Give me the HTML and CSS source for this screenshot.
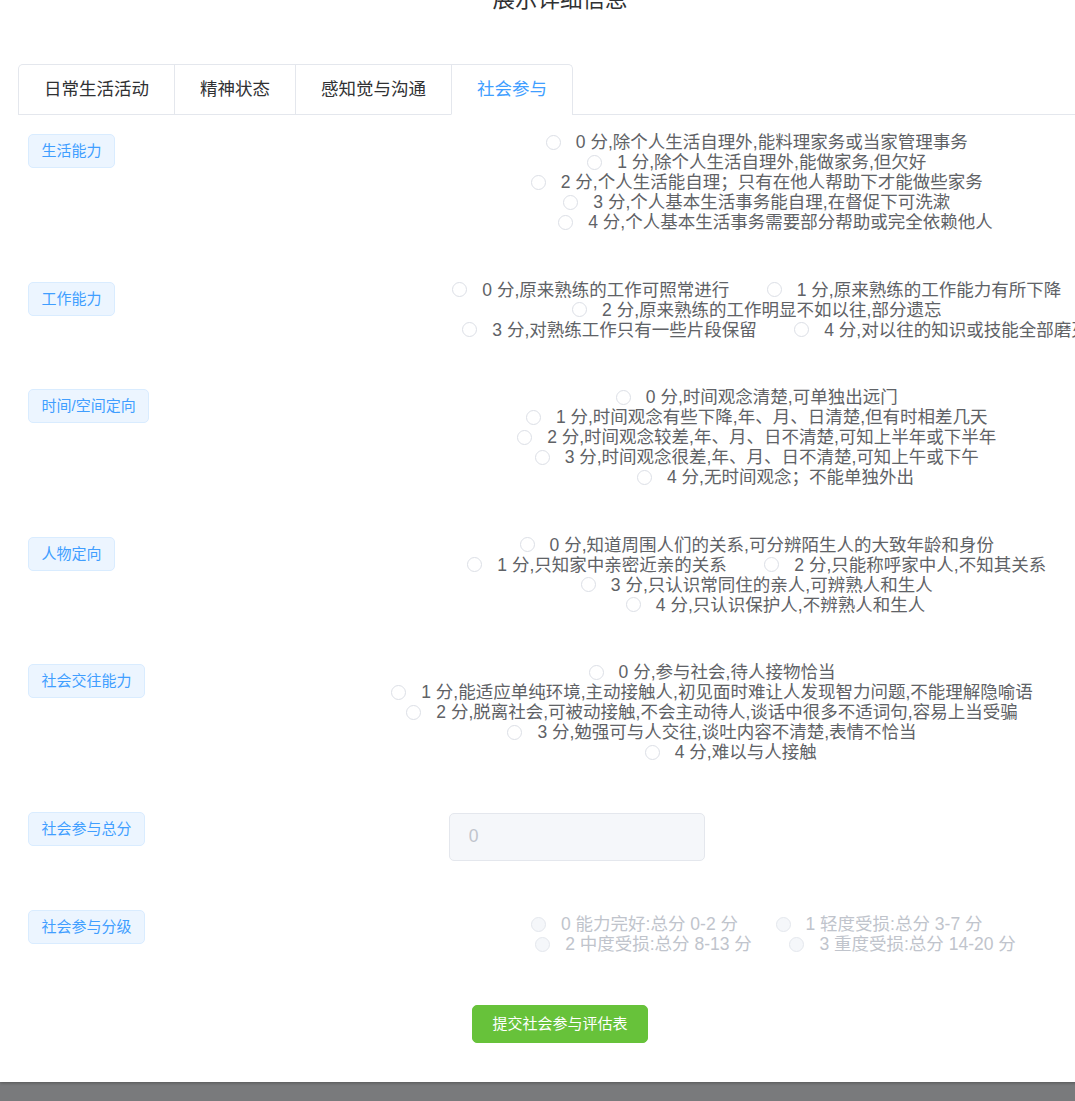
FILE: index.html
```html
<!DOCTYPE html>
<html lang="zh-CN">
<head>
<meta charset="utf-8">
<title>展示详细信息</title>
<link rel="stylesheet" href="styles.css">
</head>
<body>
<div class="dialog">
  <div class="dialog-header"><span class="dialog-title">展示详细信息</span></div>
  <div class="dialog-body">
    <div class="tabs-header">
      <div class="tabs-list">
        <div class="tab">日常生活活动</div>
        <div class="tab">精神状态</div>
        <div class="tab">感知觉与沟通</div>
        <div class="tab is-active">社会参与</div>
      </div>
    </div>
    <div class="tab-content">
      <div class="form">
        <div class="row">
          <div class="row-label"><span class="tag">生活能力</span></div>
          <div class="options">
            <div class="line"><label class="radio"><span class="dot"></span><span class="text">0 分,除个人生活自理外,能料理家务或当家管理事务</span></label></div>
            <div class="line"><label class="radio"><span class="dot"></span><span class="text">1 分,除个人生活自理外,能做家务,但欠好</span></label></div>
            <div class="line"><label class="radio"><span class="dot"></span><span class="text">2 分,个人生活能自理；只有在他人帮助下才能做些家务</span></label></div>
            <div class="line"><label class="radio"><span class="dot"></span><span class="text">3 分,个人基本生活事务能自理,在督促下可洗漱</span></label></div>
            <div class="line"><label class="radio"><span class="dot"></span><span class="text">4 分,个人基本生活事务需要部分帮助或完全依赖他人</span></label></div>
          </div>
        </div>

        <div class="row">
          <div class="row-label"><span class="tag">工作能力</span></div>
          <div class="options">
            <div class="line"><label class="radio"><span class="dot"></span><span class="text">0 分,原来熟练的工作可照常进行</span></label><label class="radio"><span class="dot"></span><span class="text">1 分,原来熟练的工作能力有所下降</span></label></div>
            <div class="line"><label class="radio"><span class="dot"></span><span class="text">2 分,原来熟练的工作明显不如以往,部分遗忘</span></label></div>
            <div class="line"><label class="radio"><span class="dot"></span><span class="text">3 分,对熟练工作只有一些片段保留</span></label><label class="radio"><span class="dot"></span><span class="text">4 分,对以往的知识或技能全部磨灭</span></label></div>
          </div>
        </div>

        <div class="row">
          <div class="row-label"><span class="tag">时间/空间定向</span></div>
          <div class="options">
            <div class="line"><label class="radio"><span class="dot"></span><span class="text">0 分,时间观念清楚,可单独出远门</span></label></div>
            <div class="line"><label class="radio"><span class="dot"></span><span class="text">1 分,时间观念有些下降,年、月、日清楚,但有时相差几天</span></label></div>
            <div class="line"><label class="radio"><span class="dot"></span><span class="text">2 分,时间观念较差,年、月、日不清楚,可知上半年或下半年</span></label></div>
            <div class="line"><label class="radio"><span class="dot"></span><span class="text">3 分,时间观念很差,年、月、日不清楚,可知上午或下午</span></label></div>
            <div class="line"><label class="radio"><span class="dot"></span><span class="text">4 分,无时间观念；不能单独外出</span></label></div>
          </div>
        </div>

        <div class="row">
          <div class="row-label"><span class="tag">人物定向</span></div>
          <div class="options">
            <div class="line"><label class="radio"><span class="dot"></span><span class="text">0 分,知道周围人们的关系,可分辨陌生人的大致年龄和身份</span></label></div>
            <div class="line"><label class="radio"><span class="dot"></span><span class="text">1 分,只知家中亲密近亲的关系</span></label><label class="radio"><span class="dot"></span><span class="text">2 分,只能称呼家中人,不知其关系</span></label></div>
            <div class="line"><label class="radio"><span class="dot"></span><span class="text">3 分,只认识常同住的亲人,可辨熟人和生人</span></label></div>
            <div class="line"><label class="radio"><span class="dot"></span><span class="text">4 分,只认识保护人,不辨熟人和生人</span></label></div>
          </div>
        </div>

        <div class="row">
          <div class="row-label"><span class="tag">社会交往能力</span></div>
          <div class="options options-wide">
            <div class="line"><label class="radio"><span class="dot"></span><span class="text">0 分,参与社会,待人接物恰当</span></label></div>
            <div class="line"><label class="radio"><span class="dot"></span><span class="text">1 分,能适应单纯环境,主动接触人,初见面时难让人发现智力问题,不能理解隐喻语</span></label></div>
            <div class="line"><label class="radio"><span class="dot"></span><span class="text">2 分,脱离社会,可被动接触,不会主动待人,谈话中很多不适词句,容易上当受骗</span></label></div>
            <div class="line"><label class="radio"><span class="dot"></span><span class="text">3 分,勉强可与人交往,谈吐内容不清楚,表情不恰当</span></label></div>
            <div class="line"><label class="radio"><span class="dot"></span><span class="text">4 分,难以与人接触</span></label></div>
          </div>
        </div>

        <div class="row">
          <div class="row-label"><span class="tag">社会参与总分</span></div>
          <div class="options options-input">
            <input class="score-input" type="text" value="0" disabled>
          </div>
        </div>

        <div class="row">
          <div class="row-label"><span class="tag">社会参与分级</span></div>
          <div class="options options-grade">
            <div class="line"><label class="radio is-disabled"><span class="dot"></span><span class="text">0 能力完好:总分 0-2 分</span></label><label class="radio is-disabled"><span class="dot"></span><span class="text">1 轻度受损:总分 3-7 分</span></label></div>
            <div class="line"><label class="radio is-disabled"><span class="dot"></span><span class="text">2 中度受损:总分 8-13 分</span></label><label class="radio is-disabled"><span class="dot"></span><span class="text">3 重度受损:总分 14-20 分</span></label></div>
          </div>
        </div>
      </div>

      <div class="footer">
        <button class="btn-submit" type="button">提交社会参与评估表</button>
      </div>
    </div>
  </div>
</div>
</body>
</html>
```
FILE: styles.css
```css
* { box-sizing: border-box; }
html, body { margin: 0; padding: 0; overflow: hidden; }
body {
  background: #797a7c;
  height: 1101px;
  font-family: "Liberation Sans", "Noto Sans CJK SC", sans-serif;
}

.dialog {
  width: 1120px;
  margin-top: -40px;
  background: #fff;
  box-shadow: 0 1px 3px rgba(0, 0, 0, 0.3);
  padding-bottom: 39px;
}

.dialog-header {
  padding: 25px 18px 12px;
  text-align: center;
  line-height: 30px;
}
.dialog-title {
  font-size: 22.5px;
  color: #303133;
}

.dialog-body {
  padding: 35px 18px 0;
}

.tabs-header {
  display: flex;
  border-bottom: 1px solid #e4e7ed;
}
.tabs-list {
  display: flex;
  border: 1px solid #e4e7ed;
  border-bottom: none;
  border-radius: 5px 5px 0 0;
  margin-bottom: -1px;
}
.tab {
  height: 50px;
  line-height: 49px;
  padding: 0 25px;
  font-size: 17.5px;
  color: #303133;
  border-left: 1px solid #e4e7ed;
  border-bottom: 1px solid transparent;
  white-space: nowrap;
}
.tab:first-child { border-left: none; }
.tab.is-active {
  color: #409eff;
  border-bottom-color: #fff;
}

.tab-content {
  padding-top: 17px;
}

.form {
  display: flex;
  flex-direction: column;
  gap: 47.5px;
}

.row {
  display: grid;
  grid-template-columns: 431px 653px;
  align-items: start;
}
.row-label {
  padding: 2px 0 0 10px;
}
.tag {
  display: inline-block;
  height: 34px;
  line-height: 32px;
  padding: 0 12.5px;
  font-size: 15px;
  color: #409eff;
  background: #ecf5ff;
  border: 1px solid #d9ecff;
  border-radius: 5px;
  white-space: nowrap;
}

.options-wide {
  width: 677.5px;
  margin-left: -57px;
}
.options-grade {
  padding-top: 6px;
}

.line {
  display: flex;
  justify-content: center;
  align-items: center;
  height: 20px;
}
.radio {
  display: inline-flex;
  align-items: center;
  margin-right: 37.5px;
  white-space: nowrap;
  font-size: 17.5px;
  line-height: 20px;
  color: #606266;
}
.options .line:last-child .radio:last-child { margin-right: 0; }
.dot {
  flex: none;
  width: 15px;
  height: 15px;
  border: 1px solid #dcdfe6;
  border-radius: 50%;
  background: #fff;
}
.text {
  padding-left: 15px;
}
.radio.is-disabled { color: #c0c4cc; }
.radio.is-disabled .dot {
  background: #f5f7fa;
  border-color: #e4e7ed;
}

.score-input {
  display: block;
  width: 256px;
  height: 48px;
  margin: 3px 0 0;
  padding: 0 18.75px;
  border: 1px solid #e4e7ed;
  border-radius: 5px;
  background: #f5f7fa;
  color: #c0c4cc;
  font-family: "Liberation Sans", "Noto Sans CJK SC", sans-serif;
  font-size: 17.5px;
  outline: none;
  -webkit-text-fill-color: #c0c4cc;
  opacity: 1;
}

.footer {
  display: flex;
  justify-content: center;
  margin-top: 51px;
}
.btn-submit {
  height: 38px;
  padding: 0 19px;
  background: #67c23a;
  border: 1px solid #67c23a;
  border-radius: 5px;
  color: #fff;
  font-family: "Liberation Sans", "Noto Sans CJK SC", sans-serif;
  font-size: 15px;
  line-height: 36px;
  cursor: pointer;
}
```
